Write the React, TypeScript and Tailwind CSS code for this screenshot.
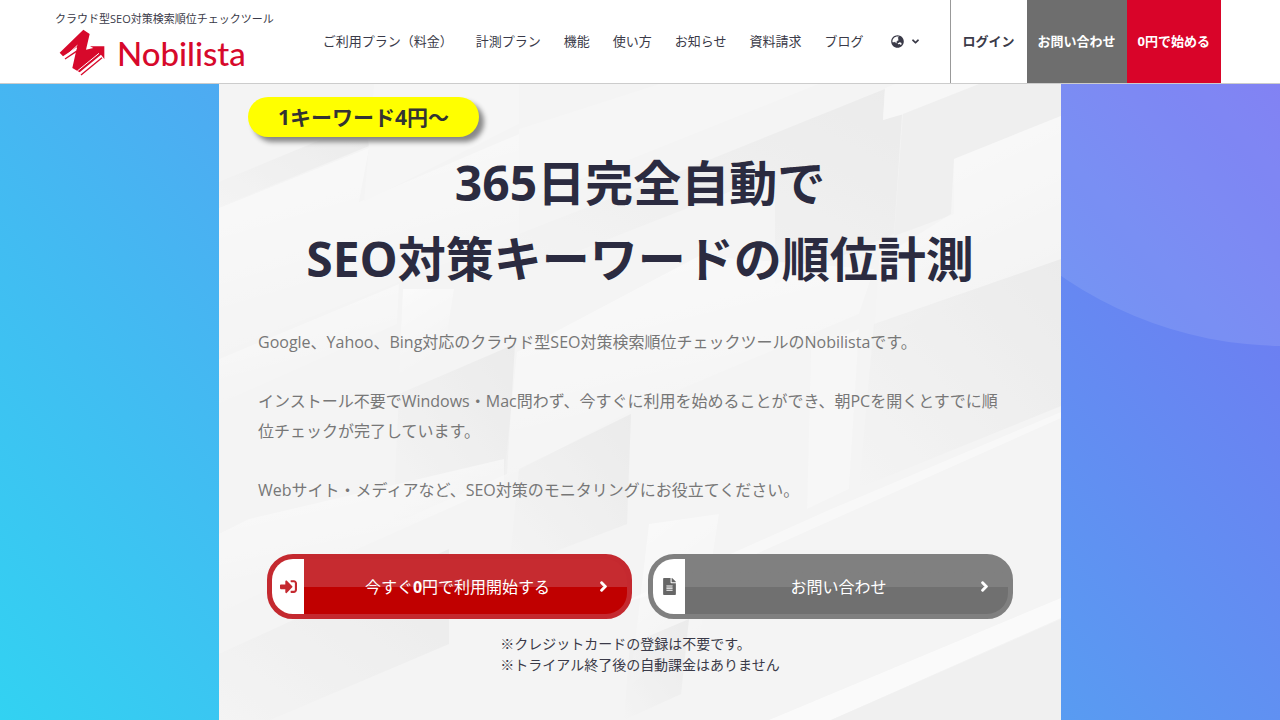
import { ReactNode } from 'react';
import { FaAngleDown, FaChevronRight, FaFileAlt, FaGlobeAsia, FaSignInAlt } from 'react-icons/fa';

const navItems = [
  'ご利用プラン（料金）',
  '計測プラン',
  '機能',
  '使い方',
  'お知らせ',
  '資料請求',
  'ブログ',
];

function LogoMark() {
  return (
    <svg viewBox="58 84 138 144" className="h-[48px] w-[46px]" aria-hidden="true">
      <path
        fill="#d7092b"
        d="M60 155 L131 86 L150 99 L139 146 L161 141 L151 136 H194 V174 L184 161 L120 214 L98 201 L112 138 L70 166 Z"
      />
      <path fill="none" stroke="#d7092b" strokeWidth="4" d="M76 174 L110 151" />
      <path fill="none" stroke="#d7092b" strokeWidth="4" d="M124 222 L187 170" />
      <path fill="none" stroke="#fff" strokeWidth="3" d="M72 170 L112 142" />
      <path fill="none" stroke="#fff" strokeWidth="3" d="M82 162 L113 133" />
      <path fill="none" stroke="#fff" strokeWidth="3" d="M113 210 L178 157" />
    </svg>
  );
}

function Header() {
  return (
    <header className="flex h-[84px] items-stretch border-b border-[#ccc] bg-white pl-[55px] pr-[59px] text-[13px] text-[#3a3a48]">
      <div className="flex flex-col pt-[11px]">
        <p className="text-[11px] leading-4">クラウド型SEO対策検索順位チェックツール</p>
        <a href="#top" className="flex items-center gap-3 pl-1 text-[#d7092b]">
          <LogoMark />
          <span className="font-[Lato,sans-serif] text-[33px] font-medium leading-[52px]">Nobilista</span>
        </a>
      </div>
      <nav className="ml-auto mr-[29px] flex items-center gap-[23px] whitespace-nowrap">
        {navItems.map((item) => (
          <a key={item} href="#nav">{item}</a>
        ))}
        <button type="button" aria-label="Language" className="ml-1 flex items-center gap-1.5">
          <FaGlobeAsia size={13} />
          <FaAngleDown size={11} />
        </button>
      </nav>
      <div className="flex whitespace-nowrap border-l border-[#999] font-bold">
        <a href="#login" className="flex items-center px-3">ログイン</a>
        <a href="#contact" className="flex items-center bg-[#6e6e6e] px-[11px] text-white">お問い合わせ</a>
        <a href="#start" className="flex items-center bg-[#d90429] px-[11px] text-white">0円で始める</a>
      </div>
    </header>
  );
}

function Facets() {
  return (
    <svg
      viewBox="0 0 842 636"
      preserveAspectRatio="xMidYMid slice"
      className="absolute inset-0 size-full bg-[#f4f4f4]"
      aria-hidden="true"
    >
      <defs>
        <linearGradient id="light" x1="0" y1="0" x2="0.4" y2="1">
          <stop offset="0" stopColor="#fff" />
          <stop offset="1" stopColor="#fff" stopOpacity="0" />
        </linearGradient>
        <linearGradient id="shade" x1="0" y1="1" x2="1" y2="0">
          <stop offset="0" stopColor="#e6e6e6" stopOpacity="0" />
          <stop offset="1" stopColor="#e6e6e6" />
        </linearGradient>
      </defs>
      <g opacity="0.6">
        <path fill="url(#shade)" d="M0 98 L145 38 L150 62 L0 123Z" />
        <path fill="url(#light)" d="M0 124 L150 64 L140 118 L300 50 L300 150 L0 270Z" />
        <path fill="#f8f8f8" d="M155 0 H300 V40 L145 118Z" />
        <path fill="#f8f8f8" d="M300 45 L440 0 H600 L300 120Z" />
        <path fill="url(#shade)" d="M490 76 L666 5 L664 36 L683 30 L675 150 L556 200 L556 90 L300 190 L300 150Z" />
        <path fill="#f9f9f9" d="M666 4 L676 0 H790 L664 36Z" />
        <path fill="#ededed" d="M684 30 L760 0 H842 V32 L735 75 V130 L675 152Z" />
        <path fill="url(#light)" d="M735 75 L842 32 V175 L655 255 L660 175 L732 130Z" />
        <path fill="url(#light)" d="M0 275 L180 200 L178 240 L0 320Z" />
        <path fill="url(#light)" d="M184 205 L235 205 L225 270 L180 290Z" />
        <path fill="url(#shade)" d="M180 310 L296 260 L288 390 L174 440Z" />
        <path fill="url(#light)" d="M298 268 L480 172 L655 185 L640 230 L415 325 L285 395Z" />
        <path fill="url(#shade)" d="M300 385 L412 330 L408 440 L290 485Z" />
        <path fill="url(#shade)" d="M655 240 L842 175 V322 L640 404Z" />
        <path fill="#f9f9f9" d="M592 265 L640 245 L630 405 L588 425Z" />
        <path fill="url(#light)" d="M30 435 L285 375 V400 L60 500 L0 530 V450Z" />
        <path fill="#fcfcfc" d="M610 426 L842 328 V334 L640 424 L470 500 L400 520Z" />
        <path fill="url(#shade)" d="M0 570 L230 465 V560 L51 636 H0Z" />
        <path fill="url(#light)" d="M430 440 L500 430 L480 560 L411 600Z" />
        <path fill="url(#shade)" d="M411 560 L470 535 L462 610 L405 636Z" />
        <path fill="#fff" d="M550 636 L842 514 V534 L612 636Z" />
        <path fill="#efefef" d="M612 636 L842 535 V636Z" />
      </g>
    </svg>
  );
}

interface CtaProps {
  href: string;
  icon: ReactNode;
  label: ReactNode;
  tone: string;
}

function CtaButton({ href, icon, label, tone }: CtaProps) {
  return (
    <a
      href={href}
      className={`flex h-[65px] flex-1 items-stretch overflow-hidden rounded-[26px] border-[5px] bg-linear-to-b from-50% to-50% ${tone}`}
    >
      <span className="flex w-8 items-center justify-center bg-white">{icon}</span>
      <span className="flex flex-1 items-center justify-center pl-8 text-base text-white">{label}</span>
      <span className="flex w-12 items-center justify-center text-white">
        <FaChevronRight size={11} stroke="currentColor" strokeWidth={50} />
      </span>
    </a>
  );
}

export default function App() {
  return (
    <div
      id="top"
      lang="ja"
      className="flex min-h-screen flex-col font-['Open_Sans','Noto_Sans_CJK_JP',sans-serif] text-[#2b2b40]"
    >
      <Header />
      <main className="relative flex flex-1 flex-col overflow-hidden bg-[linear-gradient(49deg,#32d2f2,#7474f2)]">
        <div className="absolute -right-[398px] -top-[524px] size-[786px] rounded-full bg-white/10" />
        <section className="relative mx-auto w-full max-w-[842px] flex-1">
          <Facets />
          <div className="relative pt-[13px]">
            <p className="ml-[29px] w-fit rounded-full bg-[#ffff00] px-[30px] text-[21px] font-bold leading-10 text-[#333] shadow-[5px_5px_5px_#888]">
              1キーワード4円〜
            </p>
            <h1 className="mt-2 text-center text-5xl font-bold leading-[76px]">
              365日完全自動で
              <br />
              SEO対策キーワードの順位計測
            </h1>
            <div className="mt-[30px] flex flex-col gap-[29px] pl-[39px] pr-[54px] text-base leading-[30px] text-[#777]">
              <p>Google、Yahoo、Bing対応のクラウド型SEO対策検索順位チェックツールのNobilistaです。</p>
              <p>
                インストール不要でWindows・Mac問わず、今すぐに利用を始めることができ、朝PCを開くとすでに順位チェックが完了しています。
              </p>
              <p>Webサイト・メディアなど、SEO対策のモニタリングにお役立てください。</p>
            </div>
            <div className="mt-[49px] flex gap-4 px-12">
              <CtaButton
                href="#start"
                icon={<FaSignInAlt size={17} />}
                label={<span>今すぐ<b>0</b>円で利用開始する</span>}
                tone="border-[#c4292f] from-[#c62b30] to-[#c00000] text-[#c4292f]"
              />
              <CtaButton
                href="#contact"
                icon={<FaFileAlt size={17} />}
                label="お問い合わせ"
                tone="border-[#808080] from-[#808080] to-[#707070] text-[#666]"
              />
            </div>
            <p className="mx-auto mt-[14px] w-fit text-sm leading-[21px] text-[#3a3a48]">
              ※クレジットカードの登録は不要です。
              <br />
              ※トライアル終了後の自動課金はありません
            </p>
          </div>
        </section>
      </main>
    </div>
  );
}
